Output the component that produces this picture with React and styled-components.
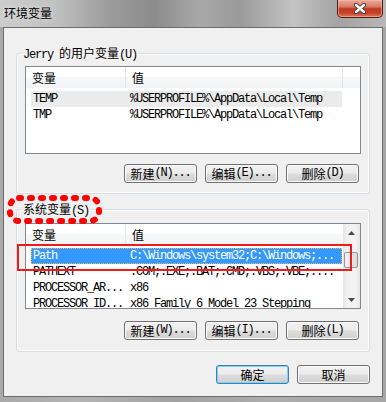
import React from 'react';
import styled, { createGlobalStyle } from 'styled-components';

const GlobalStyle = createGlobalStyle`
  html, body {
    margin: 0;
    padding: 0;
    background: #a8a8a8;
  }
  body {
    font-family: "Liberation Mono", "Noto Sans CJK SC", monospace;
  }
`;

const userVars = [
  { name: 'TEMP', value: '%USERPROFILE%\\AppData\\Local\\Temp', state: 'hover' },
  { name: 'TMP', value: '%USERPROFILE%\\AppData\\Local\\Temp' },
];

const systemVars = [
  { name: 'Path', value: 'C:\\Windows\\system32;C:\\Windows;...', state: 'selected' },
  { name: 'PATHEXT', value: '.COM;.EXE;.BAT;.CMD;.VBS;.VBE;....' },
  { name: 'PROCESSOR_AR...', value: 'x86' },
  { name: 'PROCESSOR_ID...', value: 'x86 Family 6 Model 23 Stepping' },
];

const App = () => {
  return (
    <>
      <GlobalStyle />
      <Window>
        <TitleBar>
          <Title>环境变量</Title>
          <CloseButton>
            <svg width="14" height="11" viewBox="0 0 14 11">
              <path d="M3 2 L11 9 M11 2 L3 9" stroke="#3a3a3a" strokeWidth="4.2" strokeLinecap="round" />
              <path d="M3 2 L11 9 M11 2 L3 9" stroke="#ffffff" strokeWidth="2.4" strokeLinecap="round" />
            </svg>
          </CloseButton>
        </TitleBar>

        <Client>
          <Group>
            <Legend>Jerry <Cjk>的用户变量</Cjk>(U)</Legend>
            <GroupBody $top={6} $bottom={10}>
              <ListView $height={88}>
                <ListMain>
                  <Header>
                    <HeadCell $w={100}>变量</HeadCell>
                    <HeadCell $w={217}>值</HeadCell>
                    <HeadCell $fill />
                  </Header>
                  <Rows>
                    {userVars.map((v) => (
                      <Row key={v.name} $state={v.state}>
                        <NameCell>{v.name}</NameCell>
                        <ValueCell>{v.value}</ValueCell>
                      </Row>
                    ))}
                  </Rows>
                </ListMain>
              </ListView>
              <ButtonRow $top={10}>
                <Button><Cjk>新建</Cjk>(N)...</Button>
                <Button><Cjk>编辑</Cjk>(E)...</Button>
                <Button><Cjk>删除</Cjk>(D)</Button>
              </ButtonRow>
            </GroupBody>
          </Group>

          <Group $top={8}>
            <Legend><Cjk>系统变量</Cjk>(S)</Legend>
            <GroupBody $top={7} $bottom={11}>
              <ListView $height={86}>
                <ListMain>
                  <Header>
                    <HeadCell $w={100}>变量</HeadCell>
                    <HeadCell $fill>值</HeadCell>
                  </Header>
                  <Rows>
                    {systemVars.map((v) => (
                      <Row key={v.name} $state={v.state}>
                        <NameCell>{v.name}</NameCell>
                        <ValueCell>{v.value}</ValueCell>
                      </Row>
                    ))}
                  </Rows>
                </ListMain>
                <ScrollBar>
                  <ScrollArrow>
                    <svg width="7" height="4" viewBox="0 0 7 4"><path d="M0 4 L3.5 0 L7 4 Z" fill="#4a4a4a" /></svg>
                  </ScrollArrow>
                  <ScrollTrack>
                    <Thumb />
                  </ScrollTrack>
                  <ScrollArrow>
                    <svg width="7" height="4" viewBox="0 0 7 4"><path d="M0 0 L3.5 4 L7 0 Z" fill="#4a4a4a" /></svg>
                  </ScrollArrow>
                </ScrollBar>
              </ListView>
              <ButtonRow $top={12}>
                <Button><Cjk>新建</Cjk>(W)...</Button>
                <Button><Cjk>编辑</Cjk>(I)...</Button>
                <Button><Cjk>删除</Cjk>(L)</Button>
              </ButtonRow>
            </GroupBody>
          </Group>

          <Footer>
            <Button $default><Cjk>确定</Cjk></Button>
            <Button><Cjk>取消</Cjk></Button>
          </Footer>
        </Client>

        {/* red annotations drawn over the screenshot */}
        <DottedRing width="98" height="32" viewBox="0 0 98 32">
          <rect x="4" y="4" width="89" height="23" rx="9" fill="none" stroke="#ff0000"
            strokeWidth="6" strokeDasharray="2 9" strokeLinecap="round" />
        </DottedRing>
        <RedBox />
      </Window>
    </>
  );
};

export default App;

const Window = styled.div`
  position: relative;
  width: 386px;
  height: 402px;
  overflow: hidden;
  display: flex;
  flex-direction: column;
  background: linear-gradient(90deg, #a9a9a9 0%, #b4b4b4 20%, #a2a2a2 45%, #acacac 70%, #a6a6a6 100%);
`;

const TitleBar = styled.div`
  height: 27px;
  flex-shrink: 0;
  box-sizing: border-box;
  padding: 0 3px 0 4px;
  display: flex;
  justify-content: space-between;
  align-items: flex-start;
  background: linear-gradient(90deg, #cdcdcd 0%, #c2c2c2 14%, #9c9c9c 28%, #8c8c8c 40%, #a9a9a9 52%, #9a9a9a 62%, #c3c3c3 76%, #a3a3a3 88%, #b8b8b8 100%);
`;

const Title = styled.div`
  margin-top: 6px;
  font-family: "Noto Sans CJK SC", sans-serif;
  font-size: 12px;
  line-height: 14px;
  color: #000;
  text-shadow: 0 0 5px rgba(255, 255, 255, 0.7);
`;

const CloseButton = styled.div`
  width: 46px;
  height: 18px;
  box-sizing: border-box;
  border: 1px solid #4b1e16;
  border-top: none;
  border-radius: 0 0 5px 5px;
  background: linear-gradient(#e9a999 0%, #d97a65 40%, #c2371d 52%, #c7442b 78%, #e27a5c 100%);
  box-shadow: inset 0 0 0 1px rgba(255, 190, 175, 0.55);
  display: flex;
  align-items: center;
  justify-content: center;
`;

const Client = styled.div`
  flex: 1;
  margin: 0 3px 5px;
  box-sizing: border-box;
  padding: 18px 12px 12px;
  background: #f0f0f0;
  border: 1px solid #6c6c6c;
  display: flex;
  flex-direction: column;
`;

const Group = styled.fieldset`
  margin: ${(p) => p.$top || 0}px 0 0;
  padding: 0;
  min-width: 0;
  border: 1px solid #d5dfe5;
  border-radius: 3px;
  box-shadow: inset 0 0 0 1px #fbfbfb;
`;

const Legend = styled.legend`
  margin-left: 4px;
  padding: 0 2px;
  height: 14px;
  line-height: 14px;
  font-size: 12px;
  letter-spacing: -1.2px;
  color: #000;
`;

const Cjk = styled.span`
  font-family: "Noto Sans CJK SC", sans-serif;
  font-size: 12px;
  letter-spacing: 0;
`;

const GroupBody = styled.div`
  padding: ${(p) => p.$top}px 8px ${(p) => p.$bottom}px;
  display: flex;
  flex-direction: column;
`;

const ListView = styled.div`
  height: ${(p) => p.$height}px;
  box-sizing: border-box;
  border: 1px solid #828790;
  background: #fff;
  display: flex;
  overflow: hidden;
`;

const ListMain = styled.div`
  flex: 1;
  min-width: 0;
  display: flex;
  flex-direction: column;
`;

const Header = styled.div`
  height: 21px;
  flex-shrink: 0;
  display: flex;
  background: linear-gradient(#ffffff 0%, #ffffff 45%, #f7f8f9 46%, #f2f3f5 100%);
`;

const HeadCell = styled.div`
  ${(p) => (p.$fill ? 'flex: 1;' : `width: ${p.$w}px; border-right: 1px solid #e3e5e8;`)}
  box-sizing: border-box;
  padding-left: 6px;
  font-family: "Noto Sans CJK SC", sans-serif;
  font-size: 12px;
  line-height: 21px;
  color: #000;
`;

const Rows = styled.div`
  padding-top: 3px;
`;

const Row = styled.div`
  display: flex;
  margin-left: 5px;
  width: 311px;
  height: 16px;
  line-height: 17px;
  font-size: 12px;
  letter-spacing: -1.2px;
  white-space: nowrap;
  color: ${(p) => (p.$state === 'selected' ? '#fff' : '#000')};
  background: ${(p) =>
    p.$state === 'selected' ? '#3399ff' : p.$state === 'hover' ? '#ebebeb' : 'transparent'};
  ${(p) => p.$state === 'selected' && 'outline: 1px dotted #f2b16a; outline-offset: -1px;'}
`;

const NameCell = styled.div`
  width: 95px;
  flex-shrink: 0;
  box-sizing: border-box;
  padding-left: 2px;
  overflow: hidden;
`;

const ValueCell = styled.div`
  flex: 1;
  padding-left: 4px;
  overflow: hidden;
`;

const ScrollBar = styled.div`
  width: 17px;
  flex-shrink: 0;
  display: flex;
  flex-direction: column;
  background: linear-gradient(90deg, #e4e4e4 0%, #f1f1f1 25%, #f3f3f3 75%, #e6e6e6 100%);
`;

const ScrollArrow = styled.div`
  height: 17px;
  flex-shrink: 0;
  display: flex;
  align-items: center;
  justify-content: center;
`;

const ScrollTrack = styled.div`
  flex: 1;
  padding-top: 11px;
`;

const Thumb = styled.div`
  width: 14px;
  height: 16px;
  margin-left: 1px;
  box-sizing: border-box;
  border: 1px solid #979797;
  border-radius: 2px;
  background: linear-gradient(90deg, #f4f4f4 0%, #e9e9e9 50%, #d9d9d9 100%);
`;

const ButtonRow = styled.div`
  margin-top: ${(p) => p.$top}px;
  padding-right: 2px;
  display: flex;
  justify-content: flex-end;
  gap: 8px;
`;

const Footer = styled.div`
  margin-top: 13px;
  display: flex;
  justify-content: flex-end;
  gap: 8px;
`;

const Button = styled.div`
  width: 73px;
  height: 19px;
  box-sizing: border-box;
  border: 1px solid ${(p) => (p.$default ? '#3c7fb1' : '#707070')};
  border-radius: 3px;
  background: linear-gradient(#f2f2f2 0%, #ebebeb 48%, #dddddd 52%, #cfcfcf 100%);
  box-shadow: inset 0 0 0 1px ${(p) => (p.$default ? '#7fd2f6' : '#fbfbfb')};
  display: flex;
  align-items: center;
  justify-content: center;
  font-size: 12px;
  letter-spacing: -1.2px;
  line-height: 17px;
  color: #000;
`;

const DottedRing = styled.svg`
  position: absolute;
  left: 6px;
  top: 194px;
`;

const RedBox = styled.div`
  position: absolute;
  left: 17px;
  top: 244px;
  width: 335px;
  height: 27px;
  box-sizing: border-box;
  border: 2px solid #ee1c1c;
`;
